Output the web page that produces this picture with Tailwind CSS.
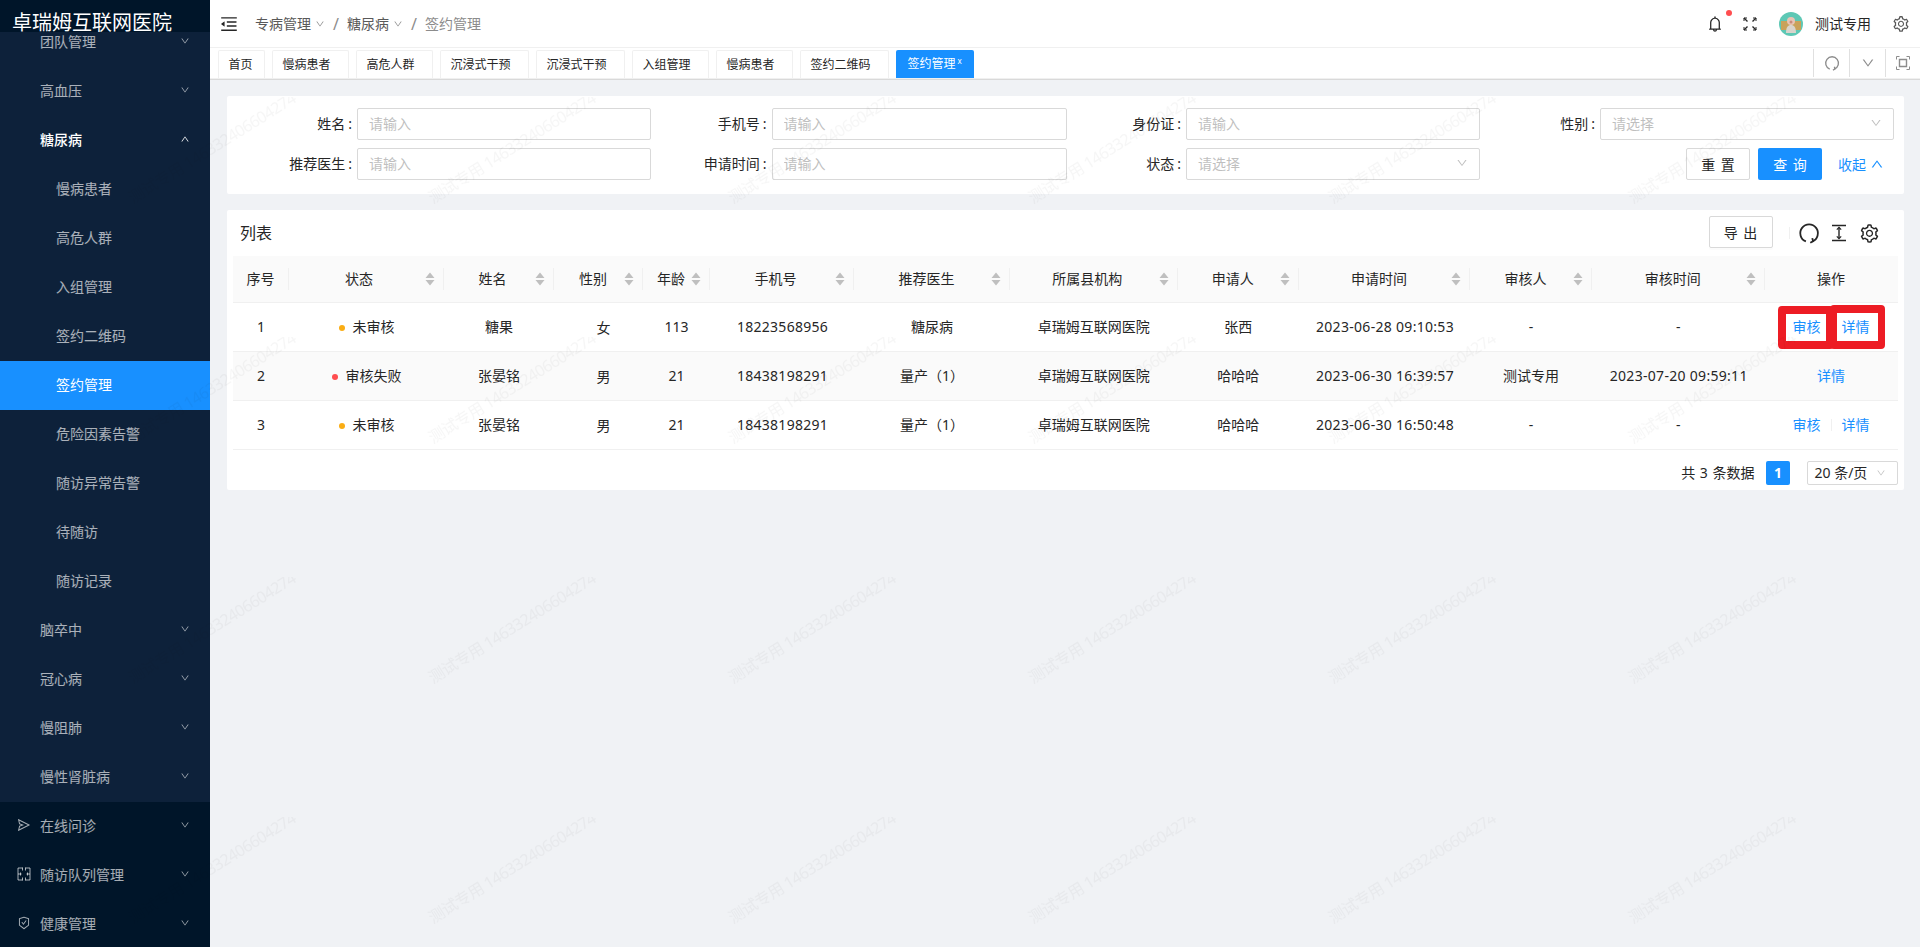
<!DOCTYPE html>
<html lang="zh-CN">
<head>
    <meta charset="UTF-8">
    <title>签约管理</title>
    <script src="https://cdn.jsdelivr.net/npm/@tailwindcss/browser@4"></script>
</head>
<body class="relative w-[1920px] h-[947px] overflow-hidden flex bg-[#f0f2f5] text-[14px] text-[#262626] font-['Noto_Sans','Noto_Sans_CJK_SC',sans-serif]">

    <!-- icon set -->
    <svg class="hidden">
        <symbol id="i-down" viewBox="0 0 1024 1024"><path fill="currentColor" d="M884 256h-75c-5.1 0-9.9 2.5-12.9 6.6L512 654.2 227.9 262.6c-3-4.1-7.8-6.6-12.9-6.6h-75c-6.5 0-10.3 7.4-6.5 12.7l352.6 486.1c12.8 17.6 39 17.6 51.7 0l352.6-486.1c3.9-5.3.1-12.7-6.4-12.7z"/></symbol>
        <symbol id="i-up" viewBox="0 0 1024 1024"><path fill="currentColor" d="M890.5 755.3L537.9 269.2c-12.8-17.6-39-17.6-51.7 0L133.5 755.3A8 8 0 0 0 140 768h75c5.1 0 9.9-2.5 12.9-6.6L512 369.8l284.1 391.6c3 4.1 7.8 6.6 12.9 6.6h75c6.5 0 10.3-7.7 6.5-12.7z"/></symbol>
        <symbol id="i-setting" viewBox="0 0 1024 1024"><path fill="currentColor" d="M924.8 625.7l-65.5-56c3.1-19 4.7-38.4 4.7-57.8s-1.6-38.8-4.7-57.8l65.5-56a32.03 32.03 0 0 0 9.3-35.2l-.9-2.6a443.74 443.74 0 0 0-79.7-137.9l-1.8-2.1a32.12 32.12 0 0 0-35.1-9.5l-81.3 28.9c-30-24.6-63.5-44-99.7-57.6l-15.7-85a32.05 32.05 0 0 0-25.8-25.7l-2.7-.5c-52.1-9.4-106.9-9.4-159 0l-2.7.5a32.05 32.05 0 0 0-25.8 25.7l-15.8 85.4a351.86 351.86 0 0 0-99 57.4l-81.9-29.1a32 32 0 0 0-35.1 9.5l-1.8 2.1a446.02 446.02 0 0 0-79.7 137.9l-.9 2.6c-4.5 12.5-.8 26.5 9.3 35.2l66.3 56.6c-3.1 18.8-4.6 38-4.6 57.1 0 19.2 1.5 38.4 4.6 57.1L99 625.5a32.03 32.03 0 0 0-9.3 35.2l.9 2.6c18.1 50.4 44.9 96.9 79.7 137.9l1.8 2.1a32.12 32.12 0 0 0 35.1 9.5l81.9-29.1c29.8 24.5 63.1 43.9 99 57.4l15.8 85.4a32.05 32.05 0 0 0 25.8 25.7l2.7.5a449.4 449.4 0 0 0 159 0l2.7-.5a32.05 32.05 0 0 0 25.8-25.7l15.7-85a350 350 0 0 0 99.7-57.6l81.3 28.9a32 32 0 0 0 35.1-9.5l1.8-2.1c34.8-41.1 61.6-87.5 79.7-137.9l.9-2.6c4.5-12.3.8-26.3-9.3-35zM788.3 465.9c2.5 15.1 3.8 30.6 3.8 46.1s-1.3 31-3.8 46.1l-6.6 40.1 74.7 63.9a370.03 370.03 0 0 1-42.6 73.6L721 702.8l-31.4 25.8c-23.9 19.6-50.5 35-79.3 45.8l-38.1 14.3-17.9 97a377.5 377.5 0 0 1-85 0l-17.9-97.2-37.8-14.5c-28.5-10.8-55-26.2-78.7-45.7l-31.4-25.9-93.4 33.2c-17-22.9-31.2-47.6-42.6-73.6l75.5-64.5-6.5-40c-2.4-14.9-3.7-30.3-3.7-45.5 0-15.3 1.2-30.6 3.7-45.5l6.5-40-75.5-64.5c11.3-26.1 25.6-50.7 42.6-73.6l93.4 33.2 31.4-25.9c23.7-19.5 50.2-34.9 78.7-45.7l37.9-14.3 17.9-97.2c28.1-3.2 56.8-3.2 85 0l17.9 97 38.1 14.3c28.7 10.8 55.4 26.2 79.3 45.8l31.4 25.8 92.8-32.9c17 22.9 31.2 47.6 42.6 73.6L781.8 426l6.5 39.9zM512 326c-97.2 0-176 78.8-176 176s78.8 176 176 176 176-78.8 176-176-78.8-176-176-176zm79.2 255.2A111.6 111.6 0 0 1 512 614c-29.9 0-58-11.7-79.2-32.8A111.6 111.6 0 0 1 400 502c0-29.9 11.7-58 32.8-79.2C454 401.6 482.1 390 512 390c29.9 0 58 11.6 79.2 32.8A111.6 111.6 0 0 1 624 502c0 29.9-11.7 58-32.8 79.2z"/></symbol>
        <symbol id="i-reload" viewBox="0 0 24 24"><path fill="none" stroke="currentColor" stroke-width="2" d="M8.6 21.2A9.6 9.6 0 1 1 15.6 21.2"/><path fill="none" stroke="currentColor" stroke-width="2" d="M13.4 22.6l3-1.6-.8-3.4"/></symbol>
        <symbol id="i-sort" viewBox="0 0 10 14"><path fill="currentColor" d="M5 0.5L9.5 6H0.5zM5 13.5L0.5 8H9.5z"/></symbol>
    </svg>

    <!-- sidebar -->
    <aside class="w-[210px] h-full shrink-0 flex flex-col overflow-hidden bg-[#001529] text-white/65">
        <div class="relative z-10 h-8 shrink-0 bg-[#001529] pl-3 pt-[9px] text-[20px] leading-[28px] text-white whitespace-nowrap">卓瑞姆互联网医院</div>
        <div class="-mt-[14.5px] bg-[#0d213a] shrink-0 [&>div]:pb-[2px]">
            <div class="h-[49px] flex items-center justify-between pl-10 pr-5">团队管理<svg class="w-2.5 h-2.5"><use href="#i-down"/></svg></div>
            <div class="h-[49px] flex items-center justify-between pl-10 pr-5">高血压<svg class="w-2.5 h-2.5"><use href="#i-down"/></svg></div>
            <div class="h-[49px] flex items-center justify-between pl-10 pr-5 text-white font-medium">糖尿病<svg class="w-2.5 h-2.5"><use href="#i-up"/></svg></div>
            <div class="h-[49px] flex items-center pl-14">慢病患者</div>
            <div class="h-[49px] flex items-center pl-14">高危人群</div>
            <div class="h-[49px] flex items-center pl-14">入组管理</div>
            <div class="h-[49px] flex items-center pl-14">签约二维码</div>
            <div class="h-[49px] flex items-center pl-14 bg-[#1890ff] text-white">签约管理</div>
            <div class="h-[49px] flex items-center pl-14">危险因素告警</div>
            <div class="h-[49px] flex items-center pl-14">随访异常告警</div>
            <div class="h-[49px] flex items-center pl-14">待随访</div>
            <div class="h-[49px] flex items-center pl-14">随访记录</div>
            <div class="h-[49px] flex items-center justify-between pl-10 pr-5">脑卒中<svg class="w-2.5 h-2.5"><use href="#i-down"/></svg></div>
            <div class="h-[49px] flex items-center justify-between pl-10 pr-5">冠心病<svg class="w-2.5 h-2.5"><use href="#i-down"/></svg></div>
            <div class="h-[49px] flex items-center justify-between pl-10 pr-5">慢阻肺<svg class="w-2.5 h-2.5"><use href="#i-down"/></svg></div>
            <div class="h-[49px] flex items-center justify-between pl-10 pr-5">慢性肾脏病<svg class="w-2.5 h-2.5"><use href="#i-down"/></svg></div>
        </div>
        <div class="h-[49px] shrink-0 flex items-center pl-[17px] pr-5 pb-[2px]">
            <svg class="w-3.5 h-3.5 mr-[9px]" viewBox="0 0 1024 1024"><path fill="currentColor" d="M931.4 498.9L94.9 79.5c-3.4-1.7-7.3-2.1-11-1.2a15.99 15.99 0 0 0-11.7 19.3l86.2 352.2c1.3 5.3 5.2 9.6 10.4 11.3l147.7 50.7-147.6 50.7c-5.2 1.8-9.1 6-10.3 11.3L72.2 926.5c-.9 3.7-.5 7.6 1.2 10.9 3.9 7.9 13.5 11.1 21.5 7.2l836.5-417c3.1-1.5 5.6-4.1 7.2-7.1 3.9-8 .7-17.6-7.2-21.6zM170.8 826.3l50.3-205.6 295.2-101.3c2.3-.8 4.2-2.6 5-5 1.4-4.2-.8-8.7-5-10.2L221.1 403 171 198.2l628 314.9-628.2 313.2z"/></svg>
            <span class="flex-1">在线问诊</span><svg class="w-2.5 h-2.5"><use href="#i-down"/></svg>
        </div>
        <div class="h-[49px] shrink-0 flex items-center pl-[17px] pr-5 pb-[2px]">
            <svg class="w-3.5 h-3.5 mr-[9px]" viewBox="0 0 14 14" fill="none" stroke="currentColor"><path d="M5.5 1H1v12h4.5M8.5 1H13v12H8.5M5.5 .5v3M8.5 .5v3M5.5 10.5v3M8.5 10.5v3M1 7h3.5M9.5 7H13M3.5 5.5v3M10.5 5.5v3"/></svg>
            <span class="flex-1">随访队列管理</span><svg class="w-2.5 h-2.5"><use href="#i-down"/></svg>
        </div>
        <div class="h-[49px] shrink-0 flex items-center pl-[17px] pr-5 pb-[2px]">
            <svg class="w-3.5 h-3.5 mr-[9px]" viewBox="0 0 1024 1024"><path fill="currentColor" d="M866.9 169.9L527.1 54.1C523 52.7 517.5 52 512 52s-11 .7-15.1 2.1L157.1 169.9c-8.3 2.8-15.1 12.4-15.1 21.2v482.4c0 8.8 5.7 20.4 12.6 25.9L499.3 968c3.5 2.7 8 4.1 12.6 4.1s9.2-1.4 12.6-4.1l344.7-268.6c6.9-5.4 12.6-17 12.6-25.9V191.1c.2-8.8-6.6-18.3-14.9-21.2zM810 654.3L512 886.5 214 654.3V226.7l298-101.6 298 101.6v427.6zm-405.8-201c-3-4.1-7.8-6.6-13-6.6H336c-6.5 0-10.3 7.4-6.5 12.7l126.4 174a16.1 16.1 0 0 0 26 0l212.6-292.7c3.8-5.3 0-12.7-6.5-12.7h-55.2c-5.1 0-10 2.5-13 6.6L468.9 542.4l-64.7-89.1z"/></svg>
            <span class="flex-1">健康管理</span><svg class="w-2.5 h-2.5"><use href="#i-down"/></svg>
        </div>
    </aside>

    <main class="flex-1 min-w-0 flex flex-col">
        <!-- top bar -->
        <header class="h-12 shrink-0 flex items-center bg-white border-b border-[#f0f0f0] text-[#595959]">
            <svg class="w-5 h-5 ml-[8.6px] text-[#262626]" viewBox="0 0 1024 1024"><path fill="currentColor" d="M408 442h480c4.4 0 8-3.6 8-8v-56c0-4.4-3.6-8-8-8H408c-4.4 0-8 3.6-8 8v56c0 4.4 3.6 8 8 8zm-8 204c0 4.4 3.6 8 8 8h480c4.4 0 8-3.6 8-8v-56c0-4.4-3.6-8-8-8H408c-4.4 0-8 3.6-8 8v56zm504-486H120c-4.4 0-8 3.6-8 8v56c0 4.4 3.6 8 8 8h784c4.4 0 8-3.6 8-8v-56c0-4.4-3.6-8-8-8zm0 632H120c-4.4 0-8 3.6-8 8v56c0 4.4 3.6 8 8 8h784c4.4 0 8-3.6 8-8v-56c0-4.4-3.6-8-8-8zM115.4 518.9L271.7 642c5.8 4.6 14.4.5 14.4-6.9V388.9c0-7.4-8.5-11.5-14.4-6.9L115.4 505.1a8.74 8.74 0 0 0 0 13.8z"/></svg>
            <nav class="flex items-center ml-[16.4px]">
                <span>专病管理</span><svg class="w-2.5 h-2.5 ml-1 text-[#8c8c8c]"><use href="#i-down"/></svg>
                <span class="mx-2 text-[16px] text-[#8c8c8c]">/</span>
                <span>糖尿病</span><svg class="w-2.5 h-2.5 ml-1 text-[#8c8c8c]"><use href="#i-down"/></svg>
                <span class="mx-2 text-[16px] text-[#8c8c8c]">/</span>
                <span class="text-[#8c8c8c]">签约管理</span>
            </nav>
            <div class="ml-auto flex items-center text-[#262626]">
                <span class="relative w-[18px] h-[18px] mr-[19px]">
                    <svg class="w-[18px] h-[18px]" viewBox="0 0 1024 1024"><path fill="currentColor" d="M816 768h-24V428c0-141.1-104.3-257.7-240-277.1V112c0-22.1-17.9-40-40-40s-40 17.9-40 40v38.9c-135.7 19.4-240 136-240 277.1v340h-24c-17.7 0-32 14.3-32 32v32c0 4.4 3.6 8 8 8h216c0 61.8 50.2 112 112 112s112-50.2 112-112h216c4.4 0 8-3.6 8-8v-32c0-17.7-14.3-32-32-32zM512 888c-26.5 0-48-21.5-48-48h96c0 26.5-21.5 48-48 48zM304 768V428c0-55.6 21.6-107.8 60.9-147.1S456.4 220 512 220c55.6 0 107.8 21.6 147.1 60.9S720 372.4 720 428v340H304z"/></svg>
                    <span class="absolute -top-[5px] -right-[8px] w-1.5 h-1.5 rounded-full bg-[#ff4d4f]"></span>
                </span>
                <svg class="w-3.5 h-3.5 mr-[22px]" viewBox="0 0 14 14" fill="none" stroke="currentColor" stroke-width="1.4"><path d="M1 1l3.5 3.5M13 1L9.5 4.5M1 13l3.5-3.5M13 13L9.5 9.5"/><path d="M1 4V1h3M10 1h3v3M1 10v3h3M10 13h3v-3" stroke-width="1"/></svg>
                <svg class="w-6 h-6 mr-[12px]" viewBox="0 0 24 24"><circle cx="12" cy="12" r="12" fill="#5ec8b5"/><path d="M2 9h20v9H2z" fill="#c9a25a"/><circle cx="12" cy="9" r="4" fill="#e8c4b4"/><path d="M7 21c0-6 2-8 5-8s5 2 5 8z" fill="#d9d4cc"/><circle cx="12" cy="10" r="1.5" fill="#c98c7c"/></svg>
                <span>测试专用</span>
                <svg class="w-[18px] h-[18px] ml-[21px] mr-[10px] text-[#595959]"><use href="#i-setting"/></svg>
            </div>
        </header>

        <!-- tab bar -->
        <div class="h-[32px] shrink-0 bg-white border-b border-[#d9d9d9]">
            <div class="h-[31px] flex items-stretch pl-[7.5px] border-b border-[#f0f0f0] text-[12px]">
                <div class="flex gap-[7px] pt-[2px]">
                    <span class="w-[47px] h-[28px] flex items-center pl-[10px] border border-b-0 border-[#f0f0f0] rounded-t-[2px]">首页</span>
                    <span class="w-[77px] h-[28px] flex items-center pl-[10px] border border-b-0 border-[#f0f0f0] rounded-t-[2px]">慢病患者</span>
                    <span class="w-[77px] h-[28px] flex items-center pl-[10px] border border-b-0 border-[#f0f0f0] rounded-t-[2px]">高危人群</span>
                    <span class="w-[89px] h-[28px] flex items-center pl-[10px] border border-b-0 border-[#f0f0f0] rounded-t-[2px]">沉浸式干预</span>
                    <span class="w-[89px] h-[28px] flex items-center pl-[10px] border border-b-0 border-[#f0f0f0] rounded-t-[2px]">沉浸式干预</span>
                    <span class="w-[77px] h-[28px] flex items-center pl-[10px] border border-b-0 border-[#f0f0f0] rounded-t-[2px]">入组管理</span>
                    <span class="w-[77px] h-[28px] flex items-center pl-[10px] border border-b-0 border-[#f0f0f0] rounded-t-[2px]">慢病患者</span>
                    <span class="w-[89px] h-[28px] flex items-center pl-[10px] border border-b-0 border-[#f0f0f0] rounded-t-[2px]">签约二维码</span>
                    <span class="h-[28px] flex items-start pt-[5px] pl-[12px] w-[78px] bg-[#1890ff] text-white rounded-t-[2px]">签约管理<span class="ml-[2px] -mt-[2px] text-[8px] leading-[16px]">x</span></span>
                </div>
                <div class="ml-auto flex text-[#8c8c8c] pt-[1px] h-[29px]">
                    <span class="w-[36px] flex items-center justify-center border-l border-[#e0e0e0]"><svg class="w-4 h-4"><use href="#i-reload"/></svg></span>
                    <span class="w-[36px] flex items-center justify-center border-l border-[#e0e0e0]"><svg class="w-3.5 h-3.5"><use href="#i-down"/></svg></span>
                    <span class="w-[35px] flex items-center justify-center border-l border-[#e0e0e0]">
                        <svg class="w-3.5 h-3.5" viewBox="0 0 14 14" fill="none" stroke="currentColor"><path d="M.5 3.5v-3h3M10.5.5h3v3M.5 10.5v3h3M10.5 13.5h3v-3"/><path d="M3.5 3.5h7v7h-7z" stroke-width="1.4"/></svg>
                    </span>
                </div>
            </div>
        </div>

        <!-- content -->
        <div class="flex-1 pt-4 pl-[17px] pr-4">
            <section class="h-[98px] bg-white rounded-[2px] pt-3 pl-[8.5px] mb-4">
                <div class="grid grid-cols-[repeat(4,414.5px)] gap-y-2">
                    <div class="flex items-center"><label class="w-[121.5px] shrink-0 pr-[5px] pb-[2px] text-right">姓名<span class="ml-[3px]">:</span></label><input placeholder="请输入" class="w-[294px] shrink-0 h-8 px-[11px] pb-[2px] border border-[#d9d9d9] rounded-[2px] placeholder:text-[#bfbfbf]"></div>
                    <div class="flex items-center"><label class="w-[121.5px] shrink-0 pr-[5px] pb-[2px] text-right">手机号<span class="ml-[3px]">:</span></label><input placeholder="请输入" class="w-[295px] shrink-0 h-8 px-[11px] pb-[2px] border border-[#d9d9d9] rounded-[2px] placeholder:text-[#bfbfbf]"></div>
                    <div class="flex items-center"><label class="w-[121.5px] shrink-0 pr-[5px] pb-[2px] text-right">身份证<span class="ml-[3px]">:</span></label><input placeholder="请输入" class="w-[294px] shrink-0 h-8 px-[11px] pb-[2px] border border-[#d9d9d9] rounded-[2px] placeholder:text-[#bfbfbf]"></div>
                    <div class="flex items-center"><label class="w-[121px] shrink-0 pr-[5px] pb-[2px] text-right">性别<span class="ml-[3px]">:</span></label><div class="w-[294px] shrink-0 h-8 px-[11px] pb-[2px] flex items-center justify-between border border-[#d9d9d9] rounded-[2px] text-[#bfbfbf]">请选择<svg class="w-3 h-3"><use href="#i-down"/></svg></div></div>

                    <div class="flex items-center"><label class="w-[121.5px] shrink-0 pr-[5px] pb-[2px] text-right">推荐医生<span class="ml-[3px]">:</span></label><input placeholder="请输入" class="w-[294px] shrink-0 h-8 px-[11px] pb-[2px] border border-[#d9d9d9] rounded-[2px] placeholder:text-[#bfbfbf]"></div>
                    <div class="flex items-center"><label class="w-[121.5px] shrink-0 pr-[5px] pb-[2px] text-right">申请时间<span class="ml-[3px]">:</span></label><input placeholder="请输入" class="w-[295px] shrink-0 h-8 px-[11px] pb-[2px] border border-[#d9d9d9] rounded-[2px] placeholder:text-[#bfbfbf]"></div>
                    <div class="flex items-center"><label class="w-[121.5px] shrink-0 pr-[5px] pb-[2px] text-right">状态<span class="ml-[3px]">:</span></label><div class="w-[294px] shrink-0 h-8 px-[11px] pb-[2px] flex items-center justify-between border border-[#d9d9d9] rounded-[2px] text-[#bfbfbf]">请选择<svg class="w-3 h-3"><use href="#i-down"/></svg></div></div>
                    <div class="flex items-center justify-end pr-[9.5px]">
                        <button class="w-16 h-8 border border-[#d9d9d9] rounded-[2px] [word-spacing:2px]">重 置</button>
                        <button class="w-16 h-8 ml-2 bg-[#1890ff] text-white rounded-[2px] [word-spacing:2px]">查 询</button>
                        <a class="ml-4 flex items-center text-[#1890ff]">收起<svg class="w-3.5 h-3.5 ml-1"><use href="#i-up"/></svg></a>
                    </div>
                </div>
            </section>

            <section class="h-[280px] bg-white rounded-[2px] px-[6px]">
                <div class="h-[46px] flex items-center pl-[7px] pr-[18.5px]">
                    <h2 class="text-[16px]">列表</h2>
                    <button class="ml-auto w-16 h-8 mt-[-2px] border border-[#d9d9d9] rounded-[2px] shadow-[0_2px_0_rgba(0,0,0,0.015)] [word-spacing:2px]">导 出</button>
                    <span class="w-px h-3 bg-[#f0f0f0] ml-[16.5px] mr-[7.6px]"></span>
                    <svg class="w-[22px] h-[22px] text-[#262626]"><use href="#i-reload"/></svg>
                    <svg class="w-[18px] h-[18px] ml-[10.4px] text-[#262626]" viewBox="0 0 18 18" fill="none" stroke="currentColor" stroke-width="1.4"><path d="M2 1.5h14M2 16.5h14M9 3.5v11"/><path d="M6.8 5.6L9 3.4l2.2 2.2M6.8 12.4L9 14.6l2.2-2.2" stroke-width="1.2"/></svg>
                    <svg class="w-[21px] h-[21px] ml-[10.5px] text-[#262626]"><use href="#i-setting"/></svg>
                </div>
                <table class="table-fixed w-[1664.5px] border-collapse">
                    <colgroup>
                        <col class="w-[56px]"><col class="w-[155px]"><col class="w-[110px]"><col class="w-[89px]"><col class="w-[67px]"><col class="w-[144px]"><col class="w-[156px]"><col class="w-[167.5px]"><col class="w-[121.5px]"><col class="w-[171px]"><col class="w-[122px]"><col class="w-[172.5px]"><col class="w-[133px]">
                    </colgroup>
                    <thead>
                        <tr class="h-[46px] bg-[#fafafa] border-b border-[#f0f0f0]">
                            <th class="p-0 font-normal"><div class="h-[22px] flex items-center justify-center border-r border-[#f0f0f0]">序号</div></th>
                            <th class="p-0 font-normal"><div class="h-[22px] flex items-center pl-2 pr-[8px] border-r border-[#f0f0f0]"><span class="flex-1 text-center mr-[4px]">状态</span><svg class="w-2.5 h-3.5 text-[#bfbfbf]"><use href="#i-sort"/></svg></div></th>
                            <th class="p-0 font-normal"><div class="h-[22px] flex items-center pl-2 pr-[8px] border-r border-[#f0f0f0]"><span class="flex-1 text-center mr-[2px]">姓名</span><svg class="w-2.5 h-3.5 text-[#bfbfbf]"><use href="#i-sort"/></svg></div></th>
                            <th class="p-0 font-normal"><div class="h-[22px] flex items-center pl-2 pr-[8px] border-r border-[#f0f0f0]"><span class="flex-1 text-center">性别</span><svg class="w-2.5 h-3.5 text-[#bfbfbf]"><use href="#i-sort"/></svg></div></th>
                            <th class="p-0 font-normal"><div class="h-[22px] flex items-center pl-2 pr-[8px] border-r border-[#f0f0f0]"><span class="flex-1 text-center">年龄</span><svg class="w-2.5 h-3.5 text-[#bfbfbf]"><use href="#i-sort"/></svg></div></th>
                            <th class="p-0 font-normal"><div class="h-[22px] flex items-center pl-2 pr-[8px] border-r border-[#f0f0f0]"><span class="flex-1 text-center mr-[2px]">手机号</span><svg class="w-2.5 h-3.5 text-[#bfbfbf]"><use href="#i-sort"/></svg></div></th>
                            <th class="p-0 font-normal"><div class="h-[22px] flex items-center pl-2 pr-[8px] border-r border-[#f0f0f0]"><span class="flex-1 text-center">推荐医生</span><svg class="w-2.5 h-3.5 text-[#bfbfbf]"><use href="#i-sort"/></svg></div></th>
                            <th class="p-0 font-normal"><div class="h-[22px] flex items-center pl-2 pr-[8px] border-r border-[#f0f0f0]"><span class="flex-1 text-center mr-[2px]">所属县机构</span><svg class="w-2.5 h-3.5 text-[#bfbfbf]"><use href="#i-sort"/></svg></div></th>
                            <th class="p-0 font-normal"><div class="h-[22px] flex items-center pl-2 pr-[8px] border-r border-[#f0f0f0]"><span class="flex-1 text-center">申请人</span><svg class="w-2.5 h-3.5 text-[#bfbfbf]"><use href="#i-sort"/></svg></div></th>
                            <th class="p-0 font-normal"><div class="h-[22px] flex items-center pl-2 pr-[8px] border-r border-[#f0f0f0]"><span class="flex-1 text-center">申请时间</span><svg class="w-2.5 h-3.5 text-[#bfbfbf]"><use href="#i-sort"/></svg></div></th>
                            <th class="p-0 font-normal"><div class="h-[22px] flex items-center pl-2 pr-[8px] border-r border-[#f0f0f0]"><span class="flex-1 text-center">审核人</span><svg class="w-2.5 h-3.5 text-[#bfbfbf]"><use href="#i-sort"/></svg></div></th>
                            <th class="p-0 font-normal"><div class="h-[22px] flex items-center pl-2 pr-[8px] border-r border-[#f0f0f0]"><span class="flex-1 text-center">审核时间</span><svg class="w-2.5 h-3.5 text-[#bfbfbf]"><use href="#i-sort"/></svg></div></th>
                            <th class="p-0 font-normal">操作</th>
                        </tr>
                    </thead>
                    <tbody class="text-center">
                        <tr class="h-[49px] border-b border-[#f0f0f0]">
                            <td>1</td>
                            <td><span class="inline-block w-1.5 h-1.5 rounded-full bg-[#faad14] align-middle mr-2"></span>未审核</td>
                            <td>糖果</td>
                            <td class="pl-[10px] pt-[2px]">女</td>
                            <td>113</td>
                            <td class="tracking-[0.25px] pl-[1px]">18223568956</td>
                            <td>糖尿病</td>
                            <td>卓瑞姆互联网医院</td>
                            <td>张西</td>
                            <td class="tracking-[0.3px] pl-[1px]">2023-06-28 09:10:53</td>
                            <td>-</td>
                            <td>-</td>
                            <td class="text-[#1890ff]"><div class="flex items-center justify-center"><a class="w-[48px] text-right pr-[10px]">审核</a><span class="w-px h-3 bg-[#f0f0f0]"></span><a class="w-[48px] text-left pl-[10px]">详情</a></div></td>
                        </tr>
                        <tr class="h-[49px] bg-[#fafafa] border-b border-[#f0f0f0]">
                            <td>2</td>
                            <td><span class="inline-block w-1.5 h-1.5 rounded-full bg-[#ff4d4f] align-middle mr-2"></span>审核失败</td>
                            <td>张晏铭</td>
                            <td class="pl-[10px] pt-[2px]">男</td>
                            <td>21</td>
                            <td class="tracking-[0.25px] pl-[1px]">18438198291</td>
                            <td>量产（1）</td>
                            <td>卓瑞姆互联网医院</td>
                            <td>哈哈哈</td>
                            <td class="tracking-[0.3px] pl-[1px]">2023-06-30 16:39:57</td>
                            <td>测试专用</td>
                            <td class="tracking-[0.3px] pl-[1px]">2023-07-20 09:59:11</td>
                            <td class="text-[#1890ff]"><a>详情</a></td>
                        </tr>
                        <tr class="h-[49px] border-b border-[#f0f0f0]">
                            <td>3</td>
                            <td><span class="inline-block w-1.5 h-1.5 rounded-full bg-[#faad14] align-middle mr-2"></span>未审核</td>
                            <td>张晏铭</td>
                            <td class="pl-[10px] pt-[2px]">男</td>
                            <td>21</td>
                            <td class="tracking-[0.25px] pl-[1px]">18438198291</td>
                            <td>量产（1）</td>
                            <td>卓瑞姆互联网医院</td>
                            <td>哈哈哈</td>
                            <td class="tracking-[0.3px] pl-[1px]">2023-06-30 16:50:48</td>
                            <td>-</td>
                            <td>-</td>
                            <td class="text-[#1890ff]"><div class="flex items-center justify-center"><a class="w-[48px] text-right pr-[10px]">审核</a><span class="w-px h-3 bg-[#f0f0f0]"></span><a class="w-[48px] text-left pl-[10px]">详情</a></div></td>
                        </tr>
                    </tbody>
                </table>
                <div class="flex items-center justify-end mt-[11px] w-[1664.5px]">
                    <span class="[word-spacing:1px]">共 3 条数据</span>
                    <span class="w-6 h-6 ml-[11.5px] flex items-center justify-center bg-[#1890ff] text-white font-bold rounded-[2px]">1</span>
                    <div class="w-[91px] h-6 ml-[16.5px] pl-[7px] pr-[11px] flex items-center justify-between border border-[#d9d9d9] rounded-[2px]">20 条/页<svg class="w-2.5 h-2.5 text-[#bfbfbf]"><use href="#i-down"/></svg></div>
                </div>
            </section>
        </div>
    </main>

    <!-- red markup boxes drawn over the screenshot -->
    <div class="absolute left-[1777.5px] top-[306px] w-[56px] h-[43px] border-[8px] border-[#ed1c24] rounded-[4px] pointer-events-none"></div>
    <div class="absolute left-[1830px] top-[305px] w-[55px] h-[44px] border-[7px] border-t-[8px] border-b-[8px] border-[#ed1c24] rounded-[4px] pointer-events-none"></div>

    <!-- watermark -->
    <svg class="absolute inset-0 w-full h-full pointer-events-none">
        <defs>
            <pattern id="wm" x="0" y="97" width="300" height="240" patternUnits="userSpaceOnUse">
                <text x="133" y="107" transform="rotate(-32 133 107)" class="text-[16px] tracking-[-0.6px] fill-black/[0.035]">测试专用 146332406604274</text>
            </pattern>
        </defs>
        <rect width="1920" height="947" fill="url(#wm)"/>
    </svg>
</body>
</html>
